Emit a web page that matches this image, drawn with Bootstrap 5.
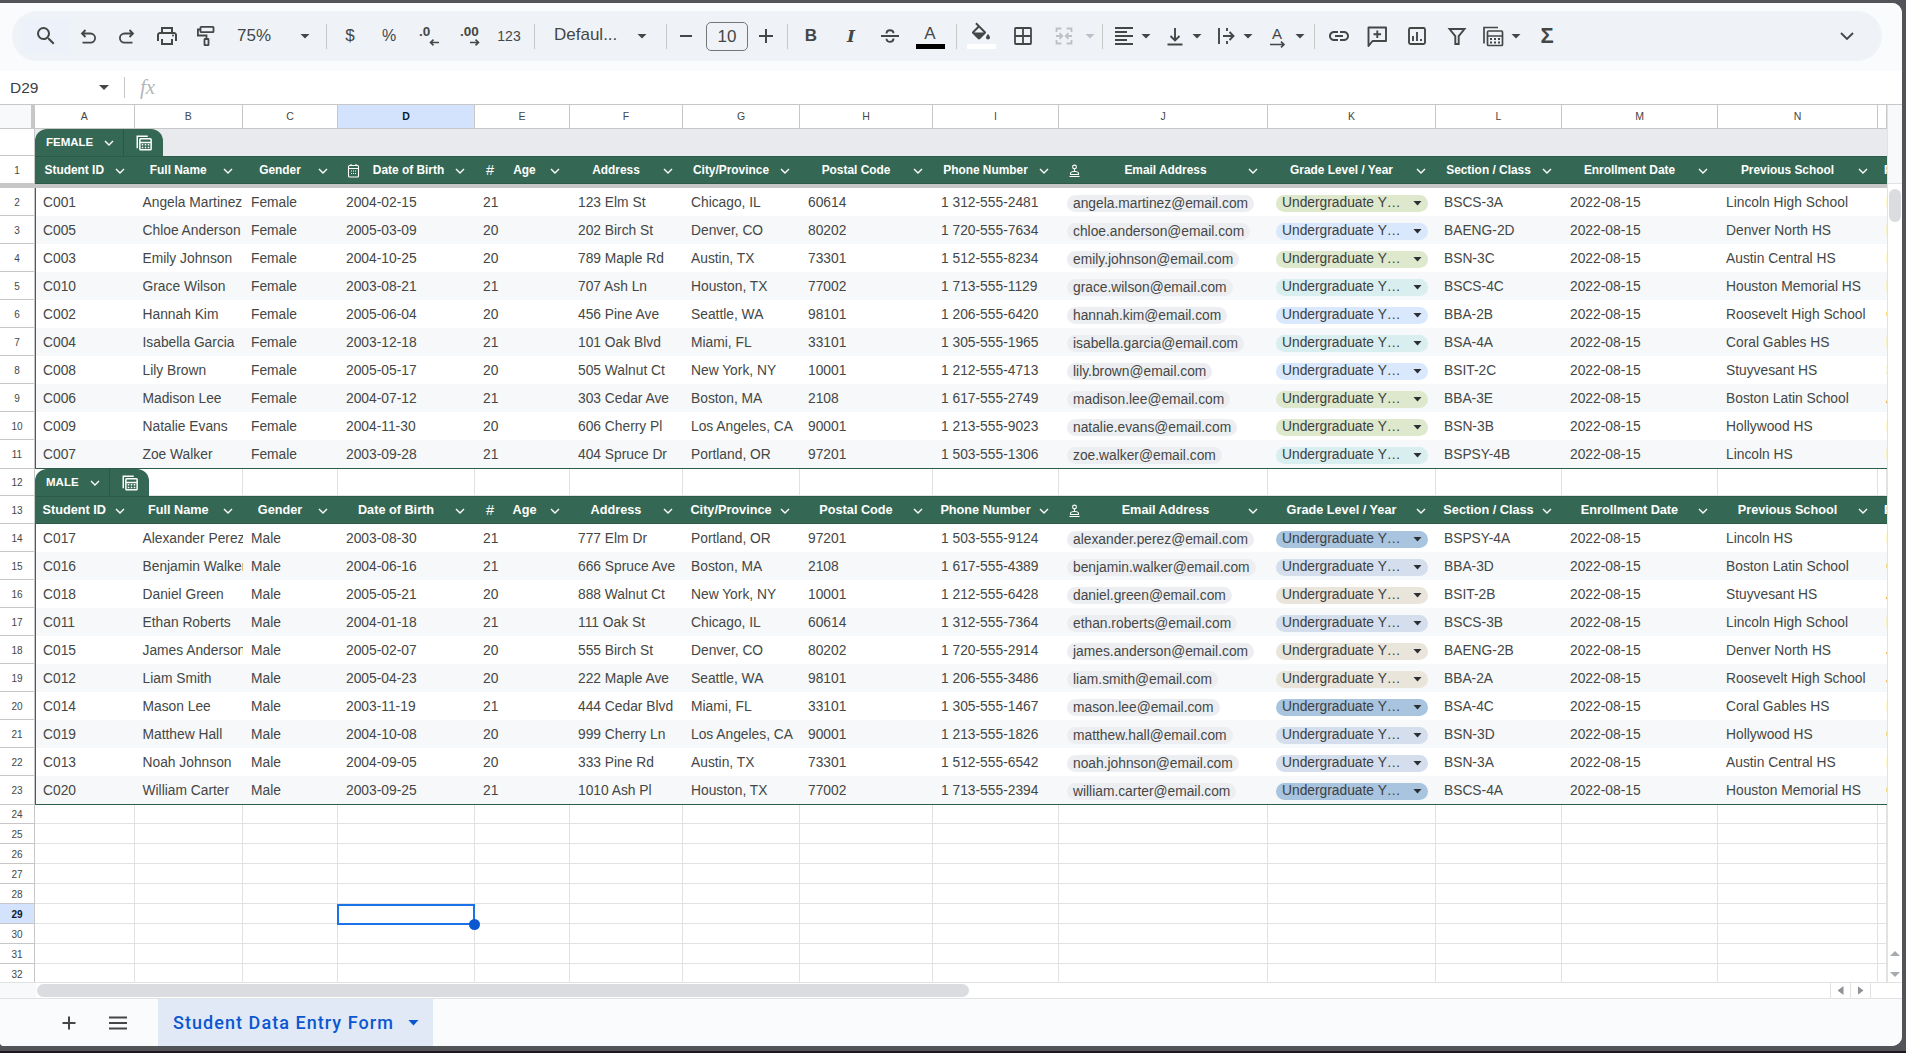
<!doctype html>
<html lang="en">
<head>
<meta charset="utf-8">
<title>Student Data Entry Form</title>
<link rel="stylesheet" href="https://cdn.jsdelivr.net/npm/bootstrap@5.3.0/dist/css/bootstrap.min.css">
<style>
html,body{height:100%;margin:0;overflow:hidden}
body{background:#53535a;font-family:"Liberation Sans",Arial,sans-serif;color:#3f4346}
.ss-win{width:1902px;height:1043px;margin-top:3px;background:#fff;border-radius:0 10px 10px 4px;overflow:hidden;display:flex;flex-direction:column}
.ss-baseline{height:2px;background:#1c1620;position:fixed;left:0;right:0;bottom:0}
.ss-topzone{height:68px;background:#f9fbfd;padding:8px 20px 10px 12px;flex:none}
.ss-pill{height:50px;background:#eff3f8;border-radius:25px;padding-left:10px;padding-right:23px;color:#444746}
.ss-pill svg{display:block;flex:none}
.ss-i{width:24px;height:24px;flex:none;display:flex;align-items:center;justify-content:center}
.ss-i.n20{width:20px}
.ss-search{width:48px;height:35px;background:#ecf1fa;flex:none;display:flex;align-items:center;justify-content:center}
.ss-arr{width:10px;height:5px;flex:none;background:#444746;clip-path:polygon(0 0,100% 0,50% 100%)}
.ss-arr.off{background:#bdc1c6}
.ss-sep{width:1px;height:25px;background:#c7c7c7;flex:none}
.ss-t{font-size:17px;line-height:24px;color:#444746;flex:none;white-space:nowrap}
.ss-small{font-size:14px}
.ss-pct{font-size:16px}
.ss-zoomtxt{width:34px}
.ss-font{width:66px;font-size:17px;margin-bottom:2px}
.ss-size{width:42px;height:29px;border:1px solid #747775;border-radius:5px;font-size:17px;flex:none;text-align:center;line-height:27px}
.ss-bar{width:30px;height:25px;flex:none;display:flex;flex-direction:column;align-items:center;justify-content:flex-end;position:relative}
.ss-bar b{display:block;width:29px;height:5px;background:#000;flex:none}
.ss-bar b.wh{background:#fff}
.ss-bar span{font-size:17px;line-height:16px;margin-bottom:2px}
.ss-bar svg{margin-bottom:3px}
.ss-rot{width:24px;height:24px;flex:none;display:flex;flex-direction:column;align-items:center;color:#444746}
.ss-rot span{font-size:15px;line-height:15px;margin-top:2px}
.g5{margin-left:5px}.g6{margin-left:6px}.g7{margin-left:7px}.g8{margin-left:8px}.g9{margin-left:9px}
.g10{margin-left:10px}.g11{margin-left:11px}.g12{margin-left:12px}.g13{margin-left:13px}.g14{margin-left:14px}
.g15{margin-left:15px}.g16{margin-left:16px}.g17{margin-left:17px}.g19{margin-left:19px}.g29{margin-left:29px}
.ss-dec{width:24px;height:20px;flex:none;display:flex;flex-direction:column;padding:0 1px 0 3px;font-size:13.5px;font-weight:700;line-height:12px;text-align:left;color:#444746}
.ss-dec svg{margin:1px 0 0 auto}
.ss-formula{height:34px;flex:none;border-bottom:1px solid #c7c7c7;padding-left:10px}
.ss-name{width:89px;font-size:15.5px;color:#3c4043}
.ss-fsep{width:1px;height:21px;background:#c7c7c7;margin:0 15px}
.ss-fx{font-family:"Liberation Serif",serif;font-style:italic;font-size:21px;color:#b3b7bb}
.ss-main{height:877px;flex:none;display:flex;overflow:hidden}
.ss-grid{width:1887px;flex:none;overflow:hidden}
.ss-line{display:grid;grid-template-columns:35px 99.5px 108.5px 95px 137px 95px 113px 117px 133px 126px 209px 168px 126px 156px 160px 9px;position:relative;width:1887px}
.ss-line>div{min-width:0;overflow:hidden;white-space:nowrap}
.ss-rn{font-size:10px;color:#444746;text-align:center;border-bottom:1px solid #c7c7c7;border-right:1px solid #c7c7c7;display:flex;align-items:center;justify-content:center;background:#fff;padding-top:1px}
.ss-rn.on{background:#d3e3fd;font-weight:700;color:#0b1a33}
.ss-colhead{height:24px}
.ss-colhead>div{background:#fff;border-bottom:1px solid #c7c7c7;border-right:1px solid #c7c7c7;font-size:10.5px;color:#444746;display:flex;align-items:center;justify-content:center}
.ss-colhead>div.corner{background:#f8f9fa;border-right:4px solid #c7c7c7}
.ss-colhead>div.on{background:#d3e3fd;font-weight:700;color:#0b1a33}
.ss-band{height:27px;display:flex;position:relative;width:1887px}
.ss-band .ss-rn{width:35px}
.ss-band .fill{flex:1;background:#e8eaed}
.ss-hdr{height:28px}
.ss-hdr>div.hc{background:#356854;color:#fff;font-weight:700;font-size:11.9px;display:flex;align-items:center;border-top:1px solid #2e5a49;border-bottom:1px solid #2e5a49;padding-top:1px}
.ss-hdr.m>div.hc{font-size:12.7px}
.ss-hdr .lbl{flex:1;text-align:center;min-width:0}
.ss-hdr .chev{width:12px;margin-right:9px;flex:none;display:block}
.ss-hdr .ic{width:20px;margin-left:5px;flex:none;display:flex;justify-content:center;align-items:center;font-weight:400;font-size:14.5px}
.ss-hdr .clip{padding-left:6px;font-weight:700}
.ss-freeze{height:4px;background:#c7c7c7;width:1887px}
.ss-data{height:28px;font-size:13.8px;color:#444746}
.ss-data>div.dc{display:flex;align-items:center;padding:2px 8px 0;background:#fff}
.ss-data.alt>div.dc{background:#f6f8f9}
.ss-data>div.first{border-left:1px solid #356854;padding-left:7px}
.ss-data.end{height:29px}
.ss-data.end>div.dc{border-bottom:1px solid #2e5a49}
.ss-mail{background:#eceef1;height:17px;line-height:17px;padding:0 6px;color:#444746}
.ss-drop{height:17px;width:152px;flex:none;padding:0 6px;display:flex;align-items:center;justify-content:space-between;color:#3c4043}
.ss-drop .arr{width:9px;height:5px;background:#2b2f33;clip-path:polygon(0 0,100% 0,50% 100%)}
.gl1{background:#dde8cc}.gl2{background:#d9e8fc}.gl3{background:#d9eeee}.gl4{background:#a9c4de}.gl5{background:#d4deec}.gl6{background:#e9e5db}
.ss-data>div.ss-oc{color:#d98a3a;padding-left:8px;padding-right:0}
.ss-blank{height:27px}
.ss-blank>div.gc{border-right:1px solid #e1e3e3;border-bottom:1px solid #e1e3e3;background:#fff}
.ss-empty{height:20px}
.ss-empty.first{height:19px}
.ss-tab{position:absolute;left:35px;bottom:0;height:27px;background:#356854;border-radius:12px 12px 0 0;display:flex;align-items:center;color:#fff;font-size:11.5px;font-weight:700;z-index:2}
.ss-tab .nm{padding-left:11px;width:89px;display:flex;align-items:center;justify-content:space-between;padding-right:8px;height:100%;border-right:1px solid #2c5646}
.ss-tab.mt .nm{width:75px}
.ss-tab .ca{width:39px;display:flex;justify-content:center}
.ss-line>div.ss-cursor{position:absolute;left:337px;top:0;width:138px;height:21px;border:2px solid #1a73e8;z-index:3;overflow:visible;pointer-events:none}
.ss-cursor i{position:absolute;right:-7px;bottom:-7px;width:11px;height:11px;border-radius:50%;background:#0b57d0;display:block}
.ss-vs{width:15px;flex:none;border-left:1px solid #e1e3e3;display:flex;flex-direction:column;align-items:center;background:#fff}
.ss-vstop{height:79px;width:100%;background:#f8f9fa;border-bottom:1px solid #e1e3e3;flex:none}
.ss-vthumb{width:12px;height:33px;border-radius:6px;background:#dadce0;margin-top:5px}
.ss-tri{width:10px;height:5px;background:#a6a9ad;display:block;flex:none}
.ss-tri.up{clip-path:polygon(50% 0,100% 100%,0 100%);margin-top:auto;margin-bottom:16px}
.ss-tri.dn{clip-path:polygon(0 0,100% 0,50% 100%);margin-bottom:5px}
.ss-hs{height:17px;flex:none;border-top:1px solid #e1e3e3;border-bottom:1px solid #e1e3e3;display:flex;align-items:center;padding-right:15px}
.ss-hc{width:36px;height:15px;background:#f8f9fa;flex:none}
.ss-hthumb{width:932px;height:13px;margin-left:1px;background:#dadce0;border-radius:7px}
.ss-sb{width:20px;height:15px;border-left:1px solid #e1e3e3;display:flex;align-items:center;justify-content:center;flex:none}
.ss-sb.tail{width:17px}
.ss-sb i{display:block;width:6px;height:9px;background:#8f9296}
.ss-sb .l{clip-path:polygon(100% 0,100% 100%,0 50%)}
.ss-sb .r{clip-path:polygon(0 0,100% 50%,0 100%)}
.ss-sheets{height:47px;flex:1;background:#f9fbfd;display:flex;align-items:stretch}
.ss-addbtn{width:24px;margin-left:57px}
.ss-menubtn{width:24px;margin-left:25px;margin-right:28px}
.ss-sheettab{width:275px;background:#e1e9f7;color:#0b57d0;font-family:Roboto,"Liberation Sans",sans-serif;font-weight:500;font-size:18px;letter-spacing:1.05px;padding-left:15px;gap:14px}
.ss-sheettab i{display:block;width:11px;height:6px;background:#0b57d0;clip-path:polygon(0 0,100% 0,50% 100%)}
.ss-serif{font-family:"DejaVu Serif",serif;font-size:17px}
.ss-sigma{font-size:22px}
</style>
</head>
<body>
<div class="ss-win">
  <div class="ss-topzone">
    <div class="ss-pill d-flex align-items-center">
      <div class="ss-search"><svg width="24" height="24" viewBox="0 0 24 24" fill="#444746"><path d="M15.5 14h-.79l-.28-.27A6.471 6.471 0 0 0 16 9.5 6.5 6.5 0 1 0 9.5 16c1.61 0 3.09-.59 4.23-1.57l.27.28v.79l5 4.99L20.49 19l-4.99-5zm-6 0C7.01 14 5 11.99 5 9.5S7.01 5 9.5 5 14 7.01 14 9.5 11.99 14 9.5 14z"/></svg></div>
      <div class="ss-i g6"><svg width="24" height="24" viewBox="0 0 24 24" fill="none" stroke="#444746" stroke-width="1.8"><path d="M9.5 6 6 9.5 9.5 13M6 9.5h8.5a4.6 4.6 0 0 1 0 9.2H6.5"/></svg></div>
      <div class="ss-i g15"><svg width="24" height="24" viewBox="0 0 24 24" fill="none" stroke="#444746" stroke-width="1.8"><path d="M14.5 6 18 9.5 14.5 13M18 9.5H9.5a4.6 4.6 0 0 0 0 9.2h8"/></svg></div>
      <div class="ss-i g16"><svg width="24" height="24" viewBox="0 0 24 24" fill="#444746"><path d="M19 8h-1V3H6v5H5c-1.66 0-3 1.34-3 3v6h4v4h12v-4h4v-6c0-1.66-1.34-3-3-3zM8 5h8v3H8V5zm8 14H8v-4h8v4zm2-2v-2H6v2H4v-6c0-.55.45-1 1-1h14c.55 0 1 .45 1 1v6h-2z"/><circle cx="18" cy="11.5" r="1"/></svg></div>
      <div class="ss-i g15"><svg width="24" height="24" viewBox="0 0 24 24" fill="none" stroke="#444746" stroke-width="1.8"><rect x="6.5" y="2.9" width="13" height="5.2" rx=".6"/><path d="M6.5 5.5H3.9v6h8.6v3.4"/><rect x="10.5" y="15" width="4" height="6.2" rx=".5"/></svg></div>
      <div class="ss-t ss-zoomtxt g19">75%</div>
      <div class="ss-arr g29"></div>
      <div class="ss-sep g16"></div>
      <div class="ss-i g11 ss-t">$</div>
      <div class="ss-i g15 ss-t ss-pct">%</div>
      <div class="ss-dec g15">.0<svg width="10" height="7" viewBox="0 0 10 7" fill="none" stroke="#444746" stroke-width="1.6"><path d="M10 3.5H1.5M4.5.6 1.5 3.5l3 2.9"/></svg></div>
      <div class="ss-dec g17">.00<svg width="10" height="7" viewBox="0 0 10 7" fill="none" stroke="#444746" stroke-width="1.6"><path d="M0 3.5h8.5M5.5.6l3 2.9-3 2.9"/></svg></div>
      <div class="ss-i g16 ss-t ss-small">123</div>
      <div class="ss-sep g13"></div>
      <div class="ss-t ss-font g19">Defaul...</div>
      <div class="ss-arr g17"></div>
      <div class="ss-sep g19"></div>
      <div class="ss-i n20 g9"><svg width="20" height="24" viewBox="0 0 20 24" stroke="#444746" stroke-width="2"><path d="M4 12h12"/></svg></div>
      <div class="ss-size g10">10</div>
      <div class="ss-i n20 g8"><svg width="20" height="24" viewBox="0 0 20 24" stroke="#444746" stroke-width="2"><path d="M3 12h14M10 5v14"/></svg></div>
      <div class="ss-sep g11"></div>
      <div class="ss-i g11 ss-t fw-bold">B</div>
      <div class="ss-i g16"><span class="ss-t ss-serif fw-bold fst-italic">I</span></div>
      <div class="ss-i g15"><svg width="24" height="24" viewBox="0 0 24 24" fill="none" stroke="#444746" stroke-width="1.9"><path d="M3 12h18M8.5 9.5c0-2 1.6-3.3 3.5-3.3s3.5 1.2 3.5 3M15.5 14.6c0 2-1.6 3.3-3.5 3.3s-3.5-1.3-3.5-3.2"/></svg></div>
      <div class="ss-bar g13"><span>A</span><b></b></div>
      <div class="ss-sep g11"></div>
      <div class="ss-bar g9"><svg width="20" height="19" viewBox="2 0 20 18" fill="#444746"><path d="M16.56 8.94 7.62 0 6.21 1.41l2.38 2.38-5.15 5.15c-.59.59-.59 1.54 0 2.12l5.5 5.5c.29.29.68.44 1.06.44s.77-.15 1.06-.44l5.5-5.5c.59-.58.59-1.53 0-2.12zM10 5.21 14.79 10H5.21L10 5.21zM19 11.5s-2 2.17-2 3.5c0 1.1.9 2 2 2s2-.9 2-2c0-1.33-2-3.5-2-3.5z"/></svg><b class="wh"></b></div>
      <div class="ss-i g15"><svg width="24" height="24" viewBox="0 0 24 24" fill="none" stroke="#444746" stroke-width="1.8"><rect x="4" y="4" width="16" height="16" rx=".8"/><path d="M12 4v16M4 12h16"/></svg></div>
      <div class="ss-i g17"><svg width="24" height="24" viewBox="0 0 24 24" fill="none" stroke="#bdc1c6" stroke-width="1.8"><path d="M9.5 4.5H4.5v3.5M9.5 19.5H4.5V16M14.5 4.5h5v3.5M14.5 19.5h5V16M4 12h6M7.5 9.2 10.3 12l-2.8 2.8M20 12h-6M16.5 9.2 13.7 12l2.8 2.8"/></svg></div>
      <div class="ss-arr off g9"></div>
      <div class="ss-sep g7"></div>
      <div class="ss-i g9"><svg width="24" height="24" viewBox="0 0 24 24" fill="#444746"><path d="M15 15H3v2h12v-2zm0-8H3v2h12V7zM3 13h18v-2H3v2zm0 8h18v-2H3v2zM3 3v2h18V3H3z"/></svg></div>
      <div class="ss-arr g5"></div>
      <div class="ss-i g12"><svg width="24" height="24" viewBox="0 0 24 24" fill="none" stroke="#444746" stroke-width="1.9"><path d="M12 4v12.5M7.5 12l4.5 4.5 4.5-4.5M4.5 20.5h15"/></svg></div>
      <div class="ss-arr g5"></div>
      <div class="ss-i g12"><svg width="24" height="24" viewBox="0 0 24 24" fill="none" stroke="#444746" stroke-width="1.9"><path d="M5 4v16M9 12h10.5M15.5 8l4 4-4 4M13 4v3M13 17v3"/></svg></div>
      <div class="ss-arr g5"></div>
      <div class="ss-rot g12"><span>A</span><svg width="20" height="7" viewBox="0 0 20 7" fill="none" stroke="#444746" stroke-width="1.6"><path d="M3 3.5h14M14 .6l3 2.9-3 2.9"/></svg></div>
      <div class="ss-arr g6"></div>
      <div class="ss-sep g9"></div>
      <div class="ss-i g12"><svg width="24" height="24" viewBox="0 0 24 24" fill="#444746"><path d="M3.9 12c0-1.71 1.39-3.1 3.1-3.1h4V7H7c-2.76 0-5 2.24-5 5s2.24 5 5 5h4v-1.9H7c-1.71 0-3.1-1.39-3.1-3.1zM8 13h8v-2H8v2zm9-6h-4v1.9h4c1.71 0 3.1 1.39 3.1 3.1s-1.39 3.1-3.1 3.1h-4V17h4c2.76 0 5-2.24 5-5s-2.24-5-5-5z"/></svg></div>
      <div class="ss-i g14"><svg width="24" height="24" viewBox="0 0 24 24" fill="none" stroke="#444746" stroke-width="1.9"><path d="M3.5 22V3.5h17.5V17H7.5z" stroke-linejoin="round"/><path d="M12.3 6.5v7.5M8.5 10.2h7.6"/></svg></div>
      <div class="ss-i g16"><svg width="24" height="24" viewBox="0 0 24 24" fill="none" stroke="#444746" stroke-width="1.9"><rect x="4" y="4" width="16" height="16" rx="1.5"/><path d="M8 17v-5M12 17V8M16 17v-2"/></svg></div>
      <div class="ss-i g16"><svg width="24" height="24" viewBox="0 0 24 24" fill="none" stroke="#444746" stroke-width="1.9"><path d="M4.5 5h15l-5.8 7.2V20h-3.4v-7.8z"/></svg></div>
      <div class="ss-i g12"><svg width="24" height="24" viewBox="0 0 24 24" fill="none" stroke="#444746" stroke-width="1.7"><path d="M3 19.5V3.5h14"/><rect x="6.5" y="7" width="15" height="14.5" rx="1"/><path d="M6.5 12h15"/><path d="M9 15h2M13 15h2M17 15h2M9 18.5h2M13 18.5h2M17 18.5h2" stroke-width="2"/></svg></div>
      <div class="ss-arr g6"></div>
      <div class="ss-i g14 ss-t ss-sigma fw-bold">Σ</div>
      <div class="ss-i ms-auto"><svg width="24" height="24" viewBox="0 0 24 24" fill="none" stroke="#444746" stroke-width="1.9"><path d="M6 9l6 6 6-6"/></svg></div>
    </div>
  </div>

  <div class="ss-formula d-flex align-items-center">
    <div class="ss-name"><span>D29</span></div>
    <div class="ss-arr"></div>
    <div class="ss-fsep"></div>
    <div class="ss-fx">fx</div>
  </div>

  <div class="ss-main">
    <div class="ss-grid" id="sheetgrid"></div>
    <div class="ss-vs"><div class="ss-vstop"></div><div class="ss-vthumb"></div><i class="ss-tri up"></i><i class="ss-tri dn"></i></div>
  </div>

  <div class="ss-hs"><div class="ss-hc"></div><div class="ss-hthumb"></div><div class="ms-auto d-flex"><div class="ss-sb"><i class="l"></i></div><div class="ss-sb"><i class="r"></i></div><div class="ss-sb tail"></div></div></div>

  <div class="ss-sheets">
    <div class="ss-addbtn d-flex align-items-center justify-content-center"><svg width="20" height="20" viewBox="0 0 20 20" stroke="#444746" stroke-width="2"><path d="M3.5 10h13M10 3.5v13"/></svg></div>
    <div class="ss-menubtn d-flex align-items-center justify-content-center"><svg width="20" height="20" viewBox="0 0 20 20" stroke="#444746" stroke-width="2"><path d="M1 4.5h18M1 10h18M1 15.5h18"/></svg></div>
    <div class="ss-sheettab d-flex align-items-center"><span>Student Data Entry Form</span><i></i></div>
  </div>
</div>
<div class="ss-baseline"></div>

<script>
const CHEV='<svg class="chev" viewBox="0 0 12 12" height="12" fill="none" stroke="#fff" stroke-width="1.4"><path d="M2 4l4 4 4-4"/></svg>';
const CAL='<svg width="13" height="15" viewBox="0 0 13 15" fill="none" stroke="#fff" stroke-width="1.1"><rect x="1.5" y="2.5" width="10" height="11.5" rx="1"/><path d="M1.5 5.5h10M4 1v2M9 1v2M4 8h1M6 8h1M8 8h1M4 10.5h1M6 10.5h1M8 10.5h1"/></svg>';
const PERSON='<svg width="13" height="15" viewBox="0 0 13 15" fill="none" stroke="#fff" stroke-width="1.1"><circle cx="6.5" cy="4" r="1.9"/><path d="M6.5 6v2M2.5 10.5c0-1.4 1.5-2 4-2s4 .6 4 2v1h-8zM1.5 13.5h10"/></svg>';
const CALC='<svg width="18" height="19" viewBox="0 0 24 24" fill="none" stroke="#fff" stroke-width="2"><path d="M3 19.5V3.5h14"/><rect x="6.5" y="7" width="15" height="14.5" rx="1"/><path d="M6.5 12h15"/><path d="M9 15h2M13 15h2M17 15h2M9 18.5h2M13 18.5h2M17 18.5h2" stroke-width="2"/></svg>';
const TCHEV='<svg width="12" height="12" viewBox="0 0 12 12" fill="none" stroke="#fff" stroke-width="1.4"><path d="M2 4l4 4 4-4"/></svg>';
const LETTERS='ABCDEFGHIJKLMNO'.split('');
const F=[
['C001','Angela Martinez','Female','2004-02-15','21','123 Elm St','Chicago, IL','60614','1 312-555-2481','angela.martinez',1,'BSCS-3A','Lincoln High School','B'],
['C005','Chloe Anderson','Female','2005-03-09','20','202 Birch St','Denver, CO','80202','1 720-555-7634','chloe.anderson',2,'BAENG-2D','Denver North HS','B'],
['C003','Emily Johnson','Female','2004-10-25','20','789 Maple Rd','Austin, TX','73301','1 512-555-8234','emily.johnson',1,'BSN-3C','Austin Central HS','B'],
['C010','Grace Wilson','Female','2003-08-21','21','707 Ash Ln','Houston, TX','77002','1 713-555-1129','grace.wilson',3,'BSCS-4C','Houston Memorial HS','B'],
['C002','Hannah Kim','Female','2005-06-04','20','456 Pine Ave','Seattle, WA','98101','1 206-555-6420','hannah.kim',2,'BBA-2B','Roosevelt High School','C'],
['C004','Isabella Garcia','Female','2003-12-18','21','101 Oak Blvd','Miami, FL','33101','1 305-555-1965','isabella.garcia',3,'BSA-4A','Coral Gables HS','B'],
['C008','Lily Brown','Female','2005-05-17','20','505 Walnut Ct','New York, NY','10001','1 212-555-4713','lily.brown',2,'BSIT-2C','Stuyvesant HS','S'],
['C006','Madison Lee','Female','2004-07-12','21','303 Cedar Ave','Boston, MA','2108','1 617-555-2749','madison.lee',1,'BBA-3E','Boston Latin School','A'],
['C009','Natalie Evans','Female','2004-11-30','20','606 Cherry Pl','Los Angeles, CA','90001','1 213-555-9023','natalie.evans',1,'BSN-3B','Hollywood HS','B'],
['C007','Zoe Walker','Female','2003-09-28','21','404 Spruce Dr','Portland, OR','97201','1 503-555-1306','zoe.walker',3,'BSPSY-4B','Lincoln HS','B']];
const M=[
['C017','Alexander Perez','Male','2003-08-30','21','777 Elm Dr','Portland, OR','97201','1 503-555-9124','alexander.perez',4,'BSPSY-4A','Lincoln HS','B'],
['C016','Benjamin Walker','Male','2004-06-16','21','666 Spruce Ave','Boston, MA','2108','1 617-555-4389','benjamin.walker',5,'BBA-3D','Boston Latin School','C'],
['C018','Daniel Green','Male','2005-05-21','20','888 Walnut Ct','New York, NY','10001','1 212-555-6428','daniel.green',6,'BSIT-2B','Stuyvesant HS','A'],
['C011','Ethan Roberts','Male','2004-01-18','21','111 Oak St','Chicago, IL','60614','1 312-555-7364','ethan.roberts',5,'BSCS-3B','Lincoln High School','B'],
['C015','James Anderson','Male','2005-02-07','20','555 Birch St','Denver, CO','80202','1 720-555-2914','james.anderson',6,'BAENG-2B','Denver North HS','J'],
['C012','Liam Smith','Male','2005-04-23','20','222 Maple Ave','Seattle, WA','98101','1 206-555-3486','liam.smith',6,'BBA-2A','Roosevelt High School','J'],
['C014','Mason Lee','Male','2003-11-19','21','444 Cedar Blvd','Miami, FL','33101','1 305-555-1467','mason.lee',4,'BSA-4C','Coral Gables HS','B'],
['C019','Matthew Hall','Male','2004-10-08','20','999 Cherry Ln','Los Angeles, CA','90001','1 213-555-1826','matthew.hall',5,'BSN-3D','Hollywood HS','C'],
['C013','Noah Johnson','Male','2004-09-05','20','333 Pine Rd','Austin, TX','73301','1 512-555-6542','noah.johnson',5,'BSN-3A','Austin Central HS','B'],
['C020','William Carter','Male','2003-09-25','21','1010 Ash Pl','Houston, TX','77002','1 713-555-2394','william.carter',4,'BSCS-4A','Houston Memorial HS','C']];
function hdr(n,male){
  const H=['Student ID','Full Name','Gender','Date of Birth','Age','Address','City/Province','Postal Code','Phone Number','Email Address','Grade Level / Year','Section / Class','Enrollment Date','Previous School'];
  const ic={3:male?'':CAL,4:'#',9:PERSON};
  let s='<div class="ss-line ss-hdr'+(male?' m':'')+'"><div class="ss-rn">'+n+'</div>';
  H.forEach((t,i)=>{s+='<div class="hc">'+(ic[i]?'<span class="ic">'+ic[i]+'</span>':'')+'<span class="lbl">'+t+'</span>'+CHEV+'</div>';});
  return s+'<div class="hc clip">P</div></div>';
}
function dat(n,r,idx,last){
  let s='<div class="ss-line ss-data'+(idx%2?' alt':'')+(last?' end':'')+'"><div class="ss-rn">'+n+'</div>';
  for(let i=0;i<9;i++)s+='<div class="dc'+(i==0?' first':'')+'">'+r[i]+'</div>';
  s+='<div class="dc"><span class="ss-mail rounded-pill">'+r[9]+'@email.com</span></div>';
  s+='<div class="dc"><span class="ss-drop rounded-pill gl'+r[10]+'"><span>Undergraduate Y…</span><span class="arr"></span></span></div>';
  s+='<div class="dc">'+r[11]+'</div><div class="dc">2022-08-15</div><div class="dc">'+r[12]+'</div><div class="dc ss-oc">'+r[13]+'</div></div>';
  return s;
}
function blank(n,cls,inner){
  let s='<div class="ss-line '+cls+'"><div class="ss-rn'+(n==29?' on':'')+'">'+n+'</div>';
  for(let i=0;i<15;i++)s+='<div class="gc"></div>';
  return s+(inner||'')+'</div>';
}
let h='<div class="ss-line ss-colhead"><div class="corner"></div>';
LETTERS.forEach(l=>{h+='<div'+(l=='D'?' class="on"':'')+'>'+(l=='O'?'':l)+'</div>';});
h+='</div>';
h+='<div class="ss-band"><div class="ss-rn"></div><div class="fill"></div><div class="ss-tab"><div class="nm"><span>FEMALE</span>'+TCHEV+'</div><div class="ca">'+CALC+'</div></div></div>';
h+=hdr(1,false)+'<div class="ss-freeze"></div>';
F.forEach((r,i)=>h+=dat(i+2,r,i,i==9));
h+=blank(12,'ss-blank','<div class="ss-tab mt"><div class="nm"><span>MALE</span>'+TCHEV+'</div><div class="ca">'+CALC+'</div></div>');
h+=hdr(13,true);
M.forEach((r,i)=>h+=dat(i+14,r,i,i==9));
for(let n=24;n<=33;n++)h+=blank(n,'ss-blank ss-empty'+(n==24?' first':''),n==29?'<div class="ss-cursor"><i></i></div>':'');
document.getElementById('sheetgrid').innerHTML=h;
</script>
<script src="https://cdn.jsdelivr.net/npm/bootstrap@5.3.0/dist/js/bootstrap.bundle.min.js"></script>
</body>
</html>
